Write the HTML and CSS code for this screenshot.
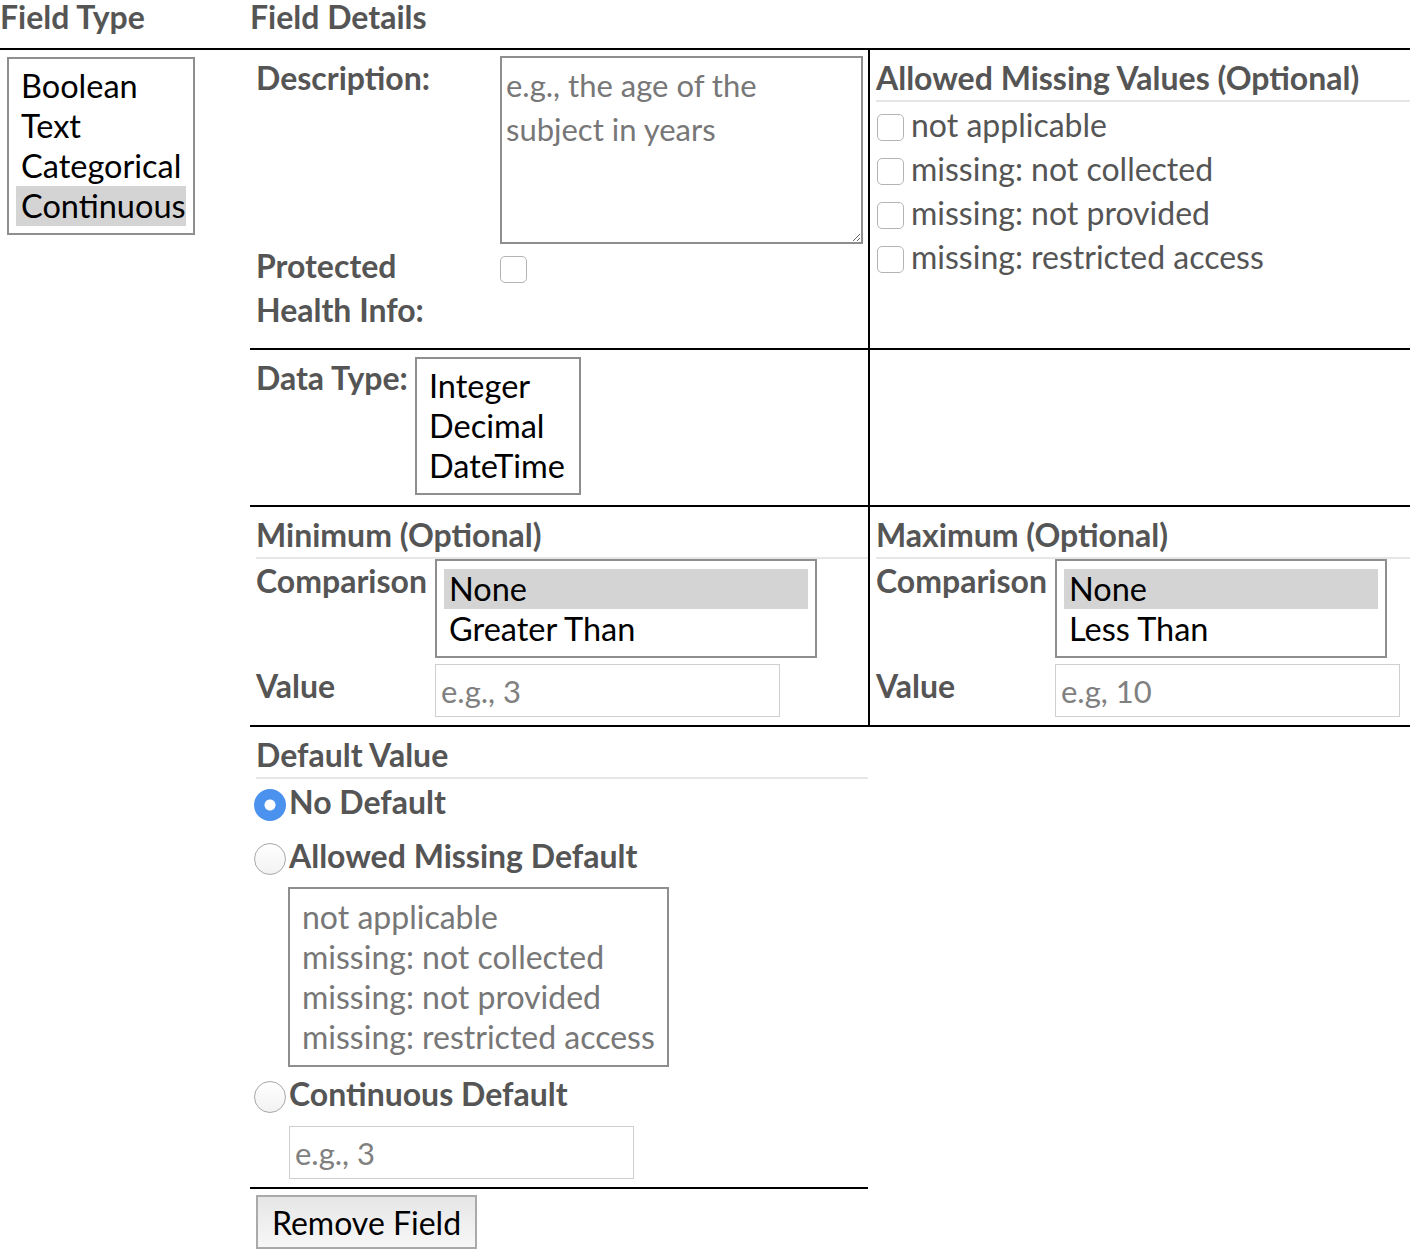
FILE: index.html
```html
<!DOCTYPE html>
<html>
<head>
<meta charset="utf-8">
<title>Field Editor</title>
<link rel="stylesheet" href="styles.css">
</head>
<body>
<div class="page">
  <div class="head-row">
    <div class="head type-head">Field Type</div>
    <div class="head">Field Details</div>
  </div>
  <div class="main">
    <div class="type-col">
      <div class="listbox type-list" role="listbox">
        <div class="opt">Boolean</div>
        <div class="opt">Text</div>
        <div class="opt">Categorical</div>
        <div class="opt selected">Continuous</div>
      </div>
    </div>
    <div class="details">
      <div class="grid">
        <div class="cell left r1">
          <div class="desc-grid">
            <label class="lbl">Description:</label>
            <textarea class="desc" placeholder="e.g., the age of the subject in years"></textarea>
            <label class="lbl wrap">Protected Health Info:</label>
            <div class="phi"><input type="checkbox" class="cb"></div>
          </div>
        </div>
        <div class="cell right r1">
          <div class="sec-head">Allowed Missing Values (Optional)</div>
          <ul class="checks">
            <li><input type="checkbox" class="cb"><span>not applicable</span></li>
            <li><input type="checkbox" class="cb"><span>missing: not collected</span></li>
            <li><input type="checkbox" class="cb"><span>missing: not provided</span></li>
            <li><input type="checkbox" class="cb"><span>missing: restricted access</span></li>
          </ul>
        </div>
        <div class="cell left r2">
          <div class="dtype">
            <span class="lbl dlbl">Data Type:</span>
            <div class="listbox dt-list" role="listbox">
              <div class="opt">Integer</div>
              <div class="opt">Decimal</div>
              <div class="opt">DateTime</div>
            </div>
          </div>
        </div>
        <div class="cell right r2"></div>
        <div class="cell left r3">
          <div class="sec-head">Minimum (Optional)</div>
          <div class="cmp-grid">
            <span class="lbl">Comparison</span>
            <div class="listbox cmp-list min-list" role="listbox">
              <div class="opt selected">None</div>
              <div class="opt">Greater Than</div>
            </div>
            <span class="lbl">Value</span>
            <input type="text" class="txt" placeholder="e.g., 3">
          </div>
        </div>
        <div class="cell right r3">
          <div class="sec-head">Maximum (Optional)</div>
          <div class="cmp-grid">
            <span class="lbl">Comparison</span>
            <div class="listbox cmp-list max-list" role="listbox">
              <div class="opt selected">None</div>
              <div class="opt">Less Than</div>
            </div>
            <span class="lbl">Value</span>
            <input type="text" class="txt" placeholder="e.g, 10">
          </div>
        </div>
        <div class="cell left r4">
          <div class="sec-head">Default Value</div>
          <div class="radio-row first"><input type="radio" name="def" class="rd" checked><span>No Default</span></div>
          <div class="radio-row"><input type="radio" name="def" class="rd"><span>Allowed Missing Default</span></div>
          <div class="listbox def-list" role="listbox">
            <div class="opt">not applicable</div>
            <div class="opt">missing: not collected</div>
            <div class="opt">missing: not provided</div>
            <div class="opt">missing: restricted access</div>
          </div>
          <div class="radio-row third"><input type="radio" name="def" class="rd"><span>Continuous Default</span></div>
          <input type="text" class="txt def-input" placeholder="e.g., 3">
        </div>
      </div>
      <button class="remove" type="button">Remove Field</button>
    </div>
  </div>
</div>
</body>
</html>
```

FILE: styles.css
```css
* { box-sizing: border-box; }

body {
  margin: 0;
  font-family: Lato, "Open Sans", "Liberation Sans", sans-serif;
  font-size: 32px;
  color: #555;
  background: #fff;
}

.head-row {
  display: flex;
  height: 50px;
  border-bottom: 2px solid #000;
}

.head {
  font-weight: 700;
  line-height: 34px;
}

.type-head { width: 250px; }

.main {
  display: flex;
  align-items: flex-start;
}

.type-col {
  width: 250px;
  padding: 7px 0 0 7px;
}

.details { width: 1160px; }

.grid {
  display: grid;
  grid-template-columns: 620px 540px;
}

.cell {
  border-bottom: 2px solid #000;
  padding: 6px 0 0 6px;
}

.cell.left { border-right: 2px solid #000; }

.cell.r1.left { padding-bottom: 16px; }
.cell.r2 { padding-bottom: 10px; }
.cell.r3 { padding-bottom: 8px; }
.cell.r4 {
  border-right: none;
  width: 618px;
  padding-bottom: 8px;
}

.lbl {
  font-weight: 700;
  line-height: 44px;
  color: #555;
}

/* list boxes */
.listbox {
  border: 2px solid #8e8e8e;
  padding: 7px;
  background: #fff;
}

.opt {
  height: 40px;
  line-height: 40px;
  padding: 0 5px;
  color: #000;
  font-size: 32.5px;
  white-space: nowrap;
}

.opt.selected { background: #d4d4d4; }

.type-list { width: 188px; }
.dt-list { width: 166px; margin-top: 1px; }
.cmp-list { padding-top: 8px; }
.min-list { width: 382px; }
.max-list { width: 332px; }

.def-list {
  width: 381px;
  margin: 9px 0 0 32px;
  padding: 8px 7px;
}
.def-list .opt { color: #777; font-size: 32px; }

/* description */
.desc-grid {
  display: grid;
  grid-template-columns: 244px 363px;
}

.desc-grid .wrap { padding-right: 12px; }

.desc {
  display: block;
  width: 363px;
  height: 188px;
  border: 2px solid #8e8e8e;
  padding: 5px 20px 0 4px;
  font-family: inherit;
  font-size: 31px;
  line-height: 44px;
  color: #333;
  resize: both;
  margin: 0;
}

.desc::placeholder { color: #777; opacity: 1; }

.phi { padding-top: 12px; }

.cb {
  appearance: none;
  -webkit-appearance: none;
  width: 27px;
  height: 27px;
  margin: 0;
  border: 1.5px solid #b4b4b4;
  border-radius: 5px;
  background: #fff;
  display: block;
}

/* right section */
.sec-head {
  font-weight: 700;
  line-height: 44px;
  border-bottom: 2px solid #e6e6e6;
}

.checks {
  list-style: none;
  margin: 1px 0 0;
  padding: 0;
}

.checks li {
  height: 44px;
  display: flex;
  align-items: center;
  gap: 7px;
  padding-left: 1px;
  line-height: 44px;
}

.checks .cb { margin-top: 4px; }

/* data type */
.dtype {
  display: flex;
  align-items: flex-start;
}

.dlbl { width: 159px; flex: none; }

/* comparisons */
.cmp-grid {
  display: grid;
  grid-template-columns: 179px auto;
  row-gap: 6px;
  align-items: start;
  justify-items: start;
}

.txt {
  width: 345px;
  height: 53px;
  border: 1px solid #cfcfcf;
  padding: 0 5px;
  font-family: inherit;
  font-size: 31px;
  color: #333;
  margin: 0;
  background: #fff;
}

.txt::placeholder { color: #808080; opacity: 1; }

/* default value */
.radio-row {
  height: 44px;
  display: flex;
  align-items: center;
  margin-top: 10px;
  font-weight: 700;
  line-height: 44px;
}

.radio-row.first { margin-top: 1px; }
.radio-row.third { margin-top: 5px; }

.rd {
  appearance: none;
  -webkit-appearance: none;
  width: 32px;
  height: 32px;
  margin: 6px 3px 0 -2px;
  border-radius: 50%;
  border: 1.5px solid #a8a8a8;
  background: linear-gradient(#fff, #f2f2f2);
  flex: none;
}

.rd:checked {
  border: none;
  background: radial-gradient(circle, #fff 0 5px, #4b92ee 6px);
}

.def-input { margin: 10px 0 0 33px; display: block; }

.remove {
  display: block;
  margin: 6px 0 0 6px;
  width: 221px;
  height: 54px;
  border: 2px solid #aaa;
  background: linear-gradient(#e6e6e6, #f7f7f7);
  font-family: inherit;
  font-size: 32px;
  color: #000;
  padding: 0;
  border-radius: 0;
}
```
